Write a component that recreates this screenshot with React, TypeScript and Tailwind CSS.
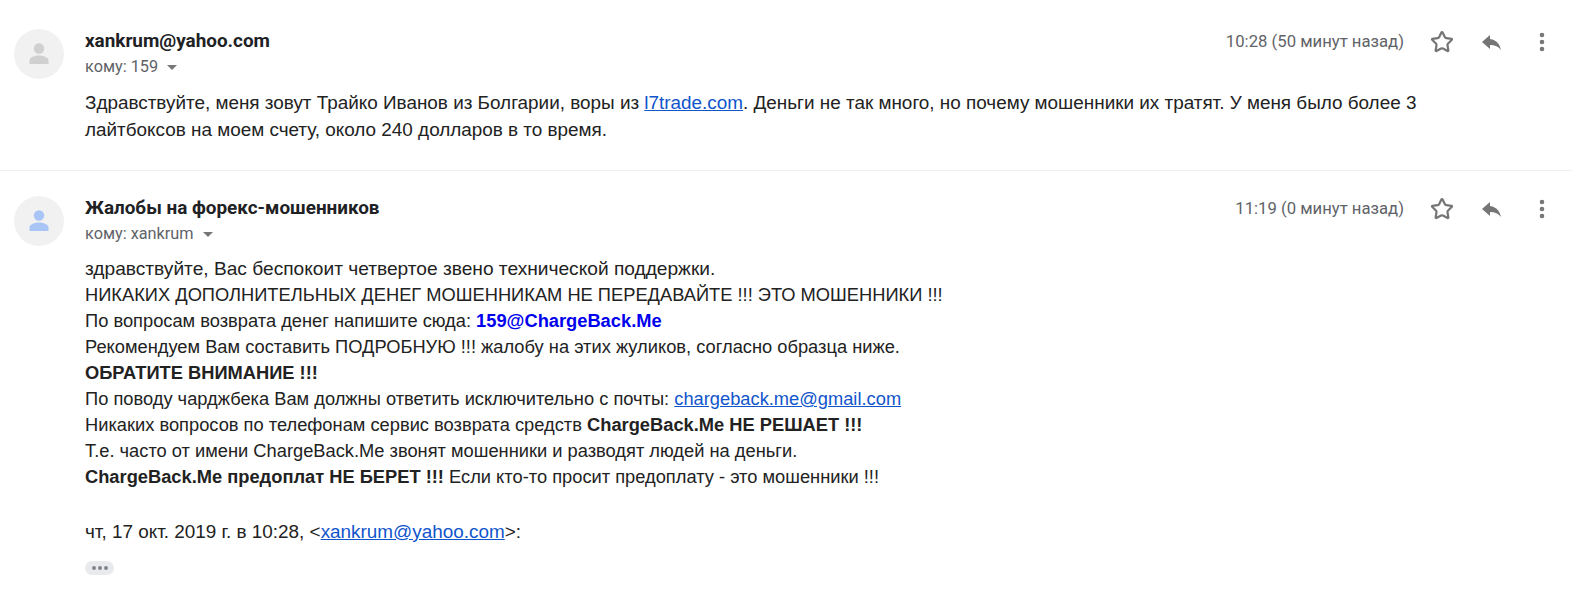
import { Star, EllipsisVertical } from 'lucide-react';

function Avatar({ color }: { color: string }) {
  return (
    <div className="w-[50px] h-[50px] rounded-full bg-[#f1f1f1] flex items-center justify-center shrink-0">
      <svg width="24" height="26" viewBox="0 0 24 26" className={color}>
        <circle cx="12" cy="7.5" r="5.2" fill="currentColor" />
        <path d="M2.5 23v-3.5C2.5 16 8 14.5 12 14.5s9.500 1.500 9.500 5V23z" fill="currentColor" />
      </svg>
    </div>
  );
}

function ReplyIcon() {
  return (
    <svg width="24" height="24" viewBox="0 0 24 24" className="text-[#757575] mt-px ml-px">
      <path d="M10 9V5l-8 7 8 7v-4.100c5 0 8.500 1.600 11 5.100-1-5-4-10-11-11z" fill="currentColor" />
    </svg>
  );
}

function Header(props: { name: string; to: string; time: string }) {
  return (
    <div className="flex items-start">
      <div className="flex-1 min-w-0">
        <div className="font-['Roboto',sans-serif] font-bold text-[18.9px] leading-[24px] text-[#202124]">{props.name}</div>
        <div className="flex items-center font-['Roboto',sans-serif] text-[16.3px] leading-[24px] text-[#5f6368] mt-[2px]">
          {props.to}
          <span className="ml-[9px] mt-px w-0 h-0 border-x-[5px] border-x-transparent border-t-[5px] border-t-[#777]" />
        </div>
      </div>
      <span className="font-['Roboto',sans-serif] text-[16.7px] leading-[24px] text-[#5f6368] mt-px mr-[26px]">{props.time}</span>
      <Star className="w-[24px] h-[24px] text-[#757575] mt-px mr-[25px]" strokeWidth={2.2} />
      <ReplyIcon />
      <EllipsisVertical className="w-[24px] h-[24px] text-[#757575] mt-px ml-[26px] mr-[18px]" strokeWidth={2.6} />
    </div>
  );
}

const linkClass = 'text-[#1155cc] underline';

export default function App() {
  return (
    <div className="w-[1572px] h-[594px] overflow-hidden bg-white font-['Liberation_Sans',Arial,sans-serif] text-[18.3px] leading-[26px] text-[#222]">
      <div className="flex gap-[21px] pl-[14px] pt-[29px] h-[171px] border-b border-[#efefef]">
        <Avatar color="text-[#d0d0d0]" />
        <div className="flex-1">
          <Header name="xankrum@yahoo.com" to="кому: 159" time="10:28 (50 минут назад)" />
          <div className="mt-[10px] w-[1345px] text-[18.9px] leading-[27px]">
            Здравствуйте, меня зовут Трайко Иванов из Болгарии, воры из <span className={linkClass}>l7trade.com</span>. Деньги не так много, но почему мошенники их тратят. У меня было более 3 лайтбоксов на моем счету, около 240 долларов в то время.
          </div>
        </div>
      </div>
      <div className="flex gap-[21px] pl-[14px] pt-[25px]">
        <Avatar color="text-[#a9c5f5]" />
        <div className="flex-1">
          <Header name="Жалобы на форекс-мошенников" to="кому: xankrum" time="11:19 (0 минут назад)" />
          <div className="mt-[10px]">
            <div className="text-[19.15px]">здравствуйте, Вас беспокоит четвертое звено технической поддержки.</div>
            <div>НИКАКИХ ДОПОЛНИТЕЛЬНЫХ ДЕНЕГ МОШЕННИКАМ НЕ ПЕРЕДАВАЙТЕ !!! ЭТО МОШЕННИКИ !!!</div>
            <div>По вопросам возврата денег напишите сюда: <b className="text-[#0000ee]">159@ChargeBack.Me</b></div>
            <div>Рекомендуем Вам составить ПОДРОБНУЮ !!! жалобу на этих жуликов, согласно образца ниже.</div>
            <div><b>ОБРАТИТЕ ВНИМАНИЕ !!!</b></div>
            <div>По поводу чарджбека Вам должны ответить исключительно с почты: <span className={linkClass}>chargeback.me@gmail.com</span></div>
            <div>Никаких вопросов по телефонам сервис возврата средств <b>ChargeBack.Me НЕ РЕШАЕТ !!!</b></div>
            <div>Т.е. часто от имени ChargeBack.Me звонят мошенники и разводят людей на деньги.</div>
            <div><b>ChargeBack.Me предоплат НЕ БЕРЕТ !!!</b> Если кто-то просит предоплату - это мошенники !!!</div>
            <div className="mt-[29px] text-[18.9px]">чт, 17 окт. 2019 г. в 10:28, &lt;<span className={linkClass}>xankrum@yahoo.com</span>&gt;:</div>
            <div className="mt-[16px] w-[29px] h-[14px] rounded-full bg-[#e8eaed] flex items-center justify-center gap-[2px]">
              <span className="w-[4px] h-[4px] rounded-full bg-[#80868b]" />
              <span className="w-[4px] h-[4px] rounded-full bg-[#80868b]" />
              <span className="w-[4px] h-[4px] rounded-full bg-[#80868b]" />
            </div>
          </div>
        </div>
      </div>
    </div>
  );
}
